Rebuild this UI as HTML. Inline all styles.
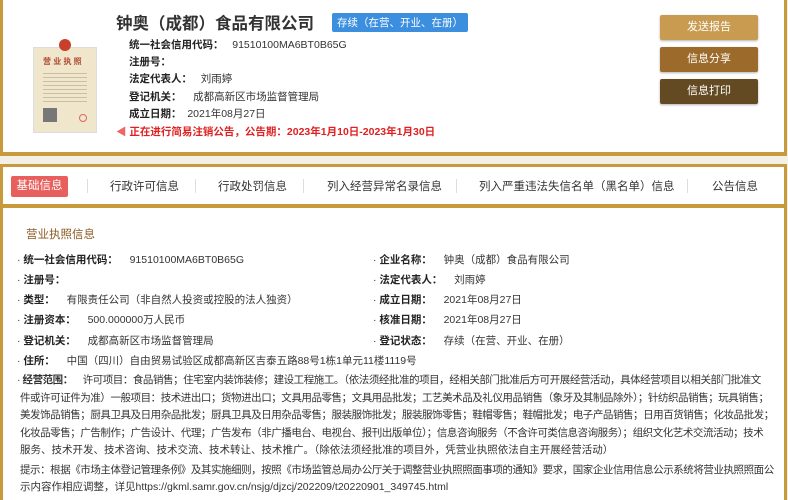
<!DOCTYPE html>
<html><head><meta charset="utf-8"><style>
*{margin:0;padding:0;box-sizing:border-box}
body{width:788px;height:500px;overflow:hidden;background:#f3f0e8;font-family:"Liberation Sans","Noto Sans CJK SC",sans-serif;color:#333;position:relative}
.top{position:absolute;left:0;top:0;width:787px;height:156px;background:#fff;border-left:3px solid #c99a3b;border-right:3px solid #c99a3b;border-bottom:4px solid #c99a3b}
.t{position:absolute;white-space:nowrap}
.title{left:113px;top:10px;font-size:16.5px;font-weight:bold;color:#333}
.badge{left:329px;top:13px;background:#3b8fde;color:#fff;font-size:10.5px;padding:2px 5px;border-radius:2px}
.lbl{font-weight:bold;color:#222}
.btn{position:absolute;left:657px;width:98px;height:25px;color:#fff;font-size:11px;text-align:center;line-height:25px;border-radius:2px;box-shadow:0 1px 2px rgba(0,0,0,.3)}
.tabs{position:absolute;left:0;top:164px;width:787px;height:44px;background:#fff;border:3px solid #c99a3b;border-bottom:4px solid #c99a3b}
.tab{position:absolute;top:11px;font-size:11.5px;color:#333;white-space:nowrap}
.sep{position:absolute;top:12px;width:1px;height:14px;background:#ddd}
.main{position:absolute;left:0;top:208px;width:787px;height:292px;background:#fff;border-left:3px solid #c99a3b;border-right:3px solid #c99a3b}
.r{position:absolute;font-size:10.5px;white-space:nowrap}
.r b{color:#222}
.l{position:absolute;left:17px;font-size:10.5px;line-height:17.6px;letter-spacing:-0.45px;white-space:nowrap}
.l.n{letter-spacing:0}
</style></head><body>
<div class="top">
 <div style="position:absolute;left:30px;top:47px;width:64px;height:86px;background:#efe6cc;border:1px solid #ddd"></div>
 <div style="position:absolute;left:56px;top:39px;width:12px;height:12px;border-radius:50%;background:#c8402a"></div>
 <div class="t" style="left:40px;top:56px;font-size:8px;color:#b0492e;font-weight:bold">营 业 执 照</div>
 <div style="position:absolute;left:40px;top:70px;width:44px;height:32px;background:repeating-linear-gradient(#efe6cc 0 3px,#c8bfa5 3px 4px)"></div>
 <div style="position:absolute;left:40px;top:108px;width:14px;height:14px;background:#777"></div>
 <div style="position:absolute;left:76px;top:114px;width:8px;height:8px;border-radius:50%;border:1px solid #d66"></div>
 <div class="t title">钟奥（成都）食品有限公司</div>
 <div class="t badge">存续（在营、开业、在册）</div>
 <div class="t" style="left:126px;top:37px;font-size:10.5px"><span class="lbl">统一社会信用代码：</span>&nbsp;&nbsp;&nbsp;91510100MA6BT0B65G</div>
 <div class="t" style="left:126px;top:54px;font-size:10.5px"><span class="lbl">注册号：</span></div>
 <div class="t" style="left:126px;top:71px;font-size:10.5px"><span class="lbl">法定代表人：</span>&nbsp;&nbsp;&nbsp;刘雨婷</div>
 <div class="t" style="left:126px;top:89px;font-size:10.5px"><span class="lbl">登记机关：</span>&nbsp;&nbsp;&nbsp;&nbsp;成都高新区市场监督管理局</div>
 <div class="t" style="left:126px;top:106px;font-size:10.5px"><span class="lbl">成立日期：</span>&nbsp;&nbsp;2021年08月27日</div>
 <div class="t" style="left:113px;top:124px;font-size:10.5px;color:#e02020;font-weight:bold"><span style="color:#e66">◀</span> 正在进行简易注销公告，公告期：2023年1月10日-2023年1月30日</div>
 <div class="btn" style="top:15px;background:#c99b50">发送报告</div>
 <div class="btn" style="top:47px;background:#9c6a2a">信息分享</div>
 <div class="btn" style="top:79px;background:#634a22">信息打印</div>
</div>
<div class="tabs">
 <div style="position:absolute;left:8px;top:9px;width:57px;height:21px;background:#e8605d;border-radius:2px;color:#fff;font-size:11.5px;text-align:center;line-height:21px">基础信息</div>
 <div class="sep" style="left:84px"></div>
 <div class="tab" style="left:107px">行政许可信息</div>
 <div class="sep" style="left:192px"></div>
 <div class="tab" style="left:215px">行政处罚信息</div>
 <div class="sep" style="left:300px"></div>
 <div class="tab" style="left:324px">列入经营异常名录信息</div>
 <div class="sep" style="left:453px"></div>
 <div class="tab" style="left:476px">列入严重违法失信名单（黑名单）信息</div>
 <div class="sep" style="left:684px"></div>
 <div class="tab" style="left:709px">公告信息</div>
</div>
<div class="main">
 <div class="t" style="left:23px;top:18px;font-size:11.5px;color:#8a5a20">营业执照信息</div>
 <div class="r" style="left:14px;top:44px">· <b>统一社会信用代码：</b>&nbsp;&nbsp;&nbsp;&nbsp;91510100MA6BT0B65G</div>
 <div class="r" style="left:14px;top:64px">· <b>注册号：</b></div>
 <div class="r" style="left:14px;top:84px">· <b>类型：</b>&nbsp;&nbsp;&nbsp;&nbsp;有限责任公司（非自然人投资或控股的法人独资）</div>
 <div class="r" style="left:14px;top:104px">· <b>注册资本：</b>&nbsp;&nbsp;&nbsp;&nbsp;500.000000万人民币</div>
 <div class="r" style="left:14px;top:125px">· <b>登记机关：</b>&nbsp;&nbsp;&nbsp;&nbsp;成都高新区市场监督管理局</div>
 <div class="r" style="left:14px;top:145px">· <b>住所：</b>&nbsp;&nbsp;&nbsp;&nbsp;中国（四川）自由贸易试验区成都高新区吉泰五路88号1栋1单元11楼1119号</div>
 <div class="r" style="left:370px;top:44px">· <b>企业名称：</b>&nbsp;&nbsp;&nbsp;&nbsp;钟奥（成都）食品有限公司</div>
 <div class="r" style="left:370px;top:64px">· <b>法定代表人：</b>&nbsp;&nbsp;&nbsp;&nbsp;刘雨婷</div>
 <div class="r" style="left:370px;top:84px">· <b>成立日期：</b>&nbsp;&nbsp;&nbsp;&nbsp;2021年08月27日</div>
 <div class="r" style="left:370px;top:104px">· <b>核准日期：</b>&nbsp;&nbsp;&nbsp;&nbsp;2021年08月27日</div>
 <div class="r" style="left:370px;top:125px">· <b>登记状态：</b>&nbsp;&nbsp;&nbsp;&nbsp;存续（在营、开业、在册）</div>
 <div class="l" style="left:14px;top:164px">· <b>经营范围：</b>&nbsp;&nbsp;&nbsp;&nbsp;许可项目：食品销售；住宅室内装饰装修；建设工程施工。（依法须经批准的项目，经相关部门批准后方可开展经营活动，具体经营项目以相关部门批准文</div>
 <div class="l" style="top:182px">件或许可证件为准）一般项目：技术进出口；货物进出口；文具用品零售；文具用品批发；工艺美术品及礼仪用品销售（象牙及其制品除外）；针纺织品销售；玩具销售；</div>
 <div class="l" style="top:199px">美发饰品销售；厨具卫具及日用杂品批发；厨具卫具及日用杂品零售；服装服饰批发；服装服饰零售；鞋帽零售；鞋帽批发；电子产品销售；日用百货销售；化妆品批发；</div>
 <div class="l" style="top:217px">化妆品零售；广告制作；广告设计、代理；广告发布（非广播电台、电视台、报刊出版单位）；信息咨询服务（不含许可类信息咨询服务）；组织文化艺术交流活动；技术</div>
 <div class="l n" style="top:234px">服务、技术开发、技术咨询、技术交流、技术转让、技术推广。（除依法须经批准的项目外，凭营业执照依法自主开展经营活动）</div>
 <div class="l" style="top:254px">提示：根据《市场主体登记管理条例》及其实施细则，按照《市场监管总局办公厅关于调整营业执照照面事项的通知》要求，国家企业信用信息公示系统将营业执照照面公</div>
 <div class="l n" style="top:271px">示内容作相应调整，详见https://gkml.samr.gov.cn/nsjg/djzcj/202209/t20220901_349745.html</div>
</div>
</body></html>
